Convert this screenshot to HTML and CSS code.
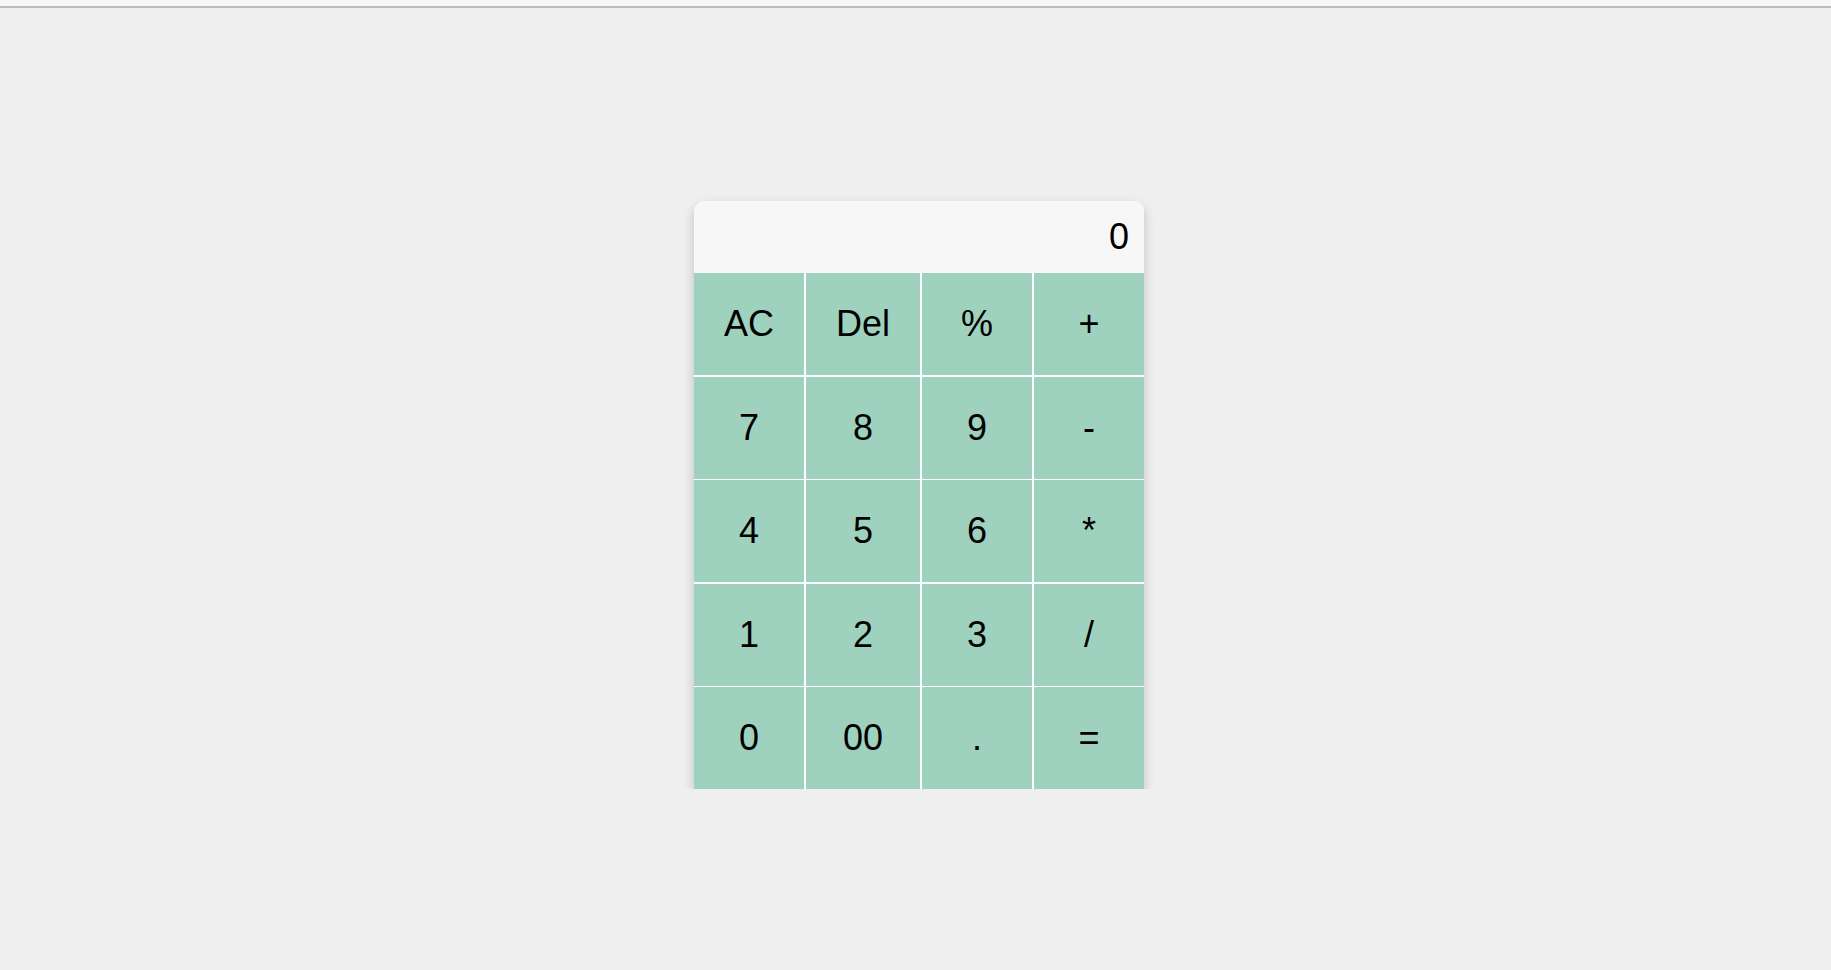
FILE: index.html
```html
<!DOCTYPE html>
<html lang="en">
<head>
<meta charset="utf-8">
<title>Calculator</title>
<link rel="stylesheet" href="styles.css">
</head>
<body>
<div class="topbar"></div>
<main class="stage">
  <div class="calc">
    <div class="display">0</div>
    <div class="keys">
      <button class="key">AC</button>
      <button class="key">Del</button>
      <button class="key">%</button>
      <button class="key">+</button>
      <button class="key">7</button>
      <button class="key">8</button>
      <button class="key">9</button>
      <button class="key">-</button>
      <button class="key">4</button>
      <button class="key">5</button>
      <button class="key">6</button>
      <button class="key">*</button>
      <button class="key">1</button>
      <button class="key">2</button>
      <button class="key">3</button>
      <button class="key">/</button>
      <button class="key">0</button>
      <button class="key">00</button>
      <button class="key">.</button>
      <button class="key">=</button>
    </div>
  </div>
</main>
</body>
</html>
```
FILE: styles.css
```css
html, body {
  margin: 0;
  padding: 0;
}
body {
  background: #efefef;
  font-family: "Liberation Sans", Arial, sans-serif;
  color: #000;
}
.topbar {
  height: 6px;
  background: #f6f6f6;
  border-bottom: 2px solid #bcbcbc;
}
.stage {
  display: flex;
  justify-content: center;
  padding-top: 193px;
  padding-left: 7px;
}
.calc {
  width: 450px;
  border-radius: 10px 10px 0 0;
  overflow: hidden;
  background: #ffffff;
  box-shadow: 0 5px 12px rgba(0, 0, 0, 0.2);
}
.display {
  height: 72px;
  line-height: 72px;
  background: #f7f7f7;
  text-align: right;
  padding-right: 15px;
  font-size: 36px;
}
.keys {
  display: grid;
  grid-template-columns: 110px 114px 110px 110px;
  grid-template-rows: repeat(5, 102px);
  column-gap: 2px;
  row-gap: 1.5px;
  background: #ffffff;
}
.key {
  border: 0;
  margin: 0;
  padding: 0;
  background: #9fd1bf;
  font-family: "Liberation Sans", Arial, sans-serif;
  font-size: 36px;
  color: #000;
}
```
